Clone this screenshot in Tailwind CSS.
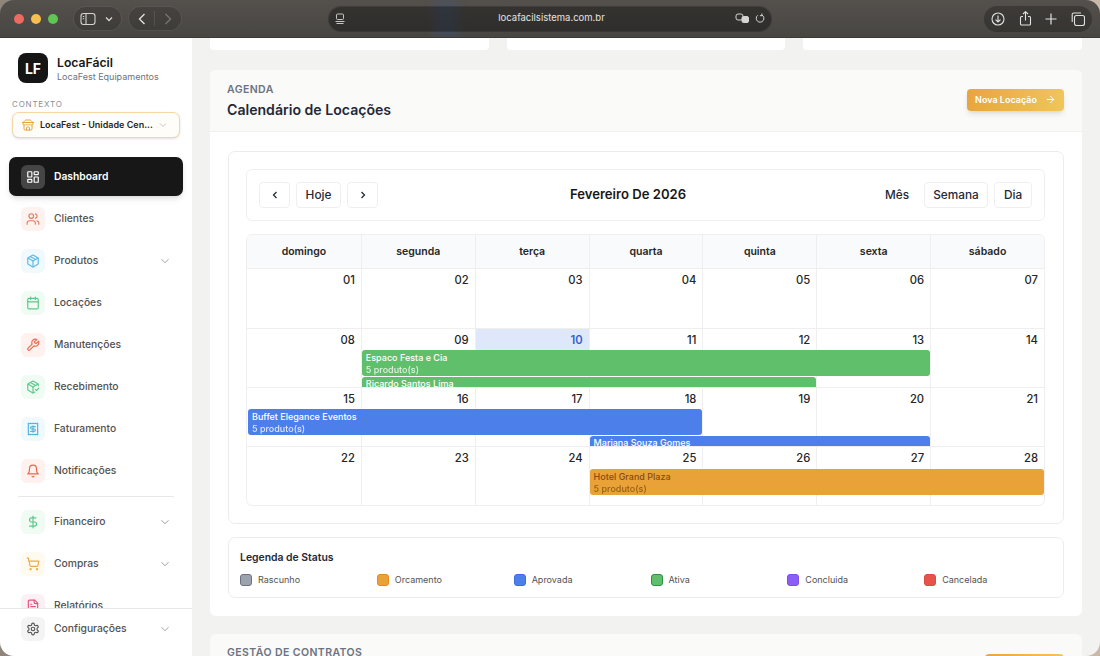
<!DOCTYPE html>
<html lang="pt-BR">

<head>
    <meta charset="UTF-8">
    <meta name="viewport" content="width=device-width, initial-scale=1.0">
    <title>LocaFácil</title>
    <script src="https://cdn.jsdelivr.net/npm/@tailwindcss/browser@4"></script>
</head>

<body class="bg-gradient-to-r from-[#8f857b] to-[#c9b9a9]">

    <div class="w-[1100px] h-[656px] overflow-hidden rounded-[14px] flex flex-col font-['Inter',sans-serif] text-[#1f2937]">

        <!-- barra do navegador -->
        <header class="relative overflow-hidden h-[38px] shrink-0 flex items-center bg-gradient-to-b from-[#54504c] to-[#484643] border-b border-[#3a3936]">
            <div class="absolute left-[434px] top-0 w-[24px] h-[38px] bg-[#3a5a8c]/30 blur-[4px]"></div>
            <div class="relative flex gap-[7px] ml-[14px]">
                <span class="w-[10px] h-[10px] rounded-full bg-[#ec6a5e]"></span>
                <span class="w-[10px] h-[10px] rounded-full bg-[#f4bf4f]"></span>
                <span class="w-[10px] h-[10px] rounded-full bg-[#61c554]"></span>
            </div>
            <div class="relative ml-[15px] w-[49px] h-[25px] rounded-full bg-black/15 border border-white/10 flex items-center pl-[6px] gap-[9px] text-[#d4d4d2]">
                <svg class="w-[16px] h-[14px]" viewBox="0 0 16 14" fill="none" stroke="currentColor" stroke-width="1.1"><rect x="1" y="1.5" width="14" height="11" rx="2.5"/><path d="M6 1.5v11M2.8 4.5h1.4M2.8 6.8h1.4"/></svg>
                <svg class="w-[8px] h-[6px]" viewBox="0 0 8 6" fill="none" stroke="currentColor" stroke-width="1.3"><path d="M1 1.5l3 3 3-3"/></svg>
            </div>
            <div class="relative ml-[6px] w-[54px] h-[25px] rounded-full bg-black/15 border border-white/10 flex items-center">
                <div class="w-[26px] h-[15px] border-r border-white/10 flex items-center justify-center text-[#e0e0de]">
                    <svg class="w-[8px] h-[12px]" viewBox="0 0 8 12" fill="none" stroke="currentColor" stroke-width="1.4"><path d="M6.5 1L1.5 6l5 5"/></svg>
                </div>
                <div class="w-[26px] flex items-center justify-center text-[#77756f]">
                    <svg class="w-[8px] h-[12px]" viewBox="0 0 8 12" fill="none" stroke="currentColor" stroke-width="1.4"><path d="M1.5 1l5 5-5 5"/></svg>
                </div>
            </div>
            <div class="relative ml-[146px] w-[444px] h-[26px] rounded-full bg-black/35 border border-white/5 flex items-center pl-[6px] pr-[5px] text-[#e4e4e2]">
                <svg class="w-[10px] h-[12px] text-[#c4c4c2]" viewBox="0 0 10 12" fill="none" stroke="currentColor" stroke-width="1"><rect x="1.5" y="1" width="7" height="5.5" rx="1"/><path d="M.5 8.5h9M1.5 10.5h7"/></svg>
                <span class="flex-1 text-center text-[9.5px] pl-[23px]">locafacilsistema.com.br</span>
                <svg class="w-[15px] h-[11px] text-[#d4d4d2]" viewBox="0 0 15 11" fill="none" stroke="currentColor" stroke-width="1"><rect x="1" y="1" width="7" height="6" rx="2"/><rect x="7" y="3.5" width="6.5" height="6" rx="1.5" fill="currentColor"/></svg>
                <svg class="ml-[5px] mr-[1px] w-[10px] h-[11px]" viewBox="0 0 11 11" fill="none" stroke="currentColor" stroke-width="1"><path d="M7.5 1.6A4.2 4.2 0 1 1 3 2M7.6 0v2.4H5.4"/></svg>
            </div>
            <div class="relative ml-[212px] w-[108px] h-[26px] rounded-full bg-black/25 flex items-center justify-between px-[7px] text-[#e2e2e0]">
                <svg class="w-[14px] h-[14px]" viewBox="0 0 14 14" fill="none" stroke="currentColor" stroke-width="1.1"><circle cx="7" cy="7" r="6"/><path d="M7 3.5v6.5M4.5 7.6L7 10l2.5-2.4"/></svg>
                <svg class="w-[13px] h-[15px]" viewBox="0 0 13 15" fill="none" stroke="currentColor" stroke-width="1.1"><path d="M4 5.5H2.5a1 1 0 0 0-1 1v6.5a1 1 0 0 0 1 1h8a1 1 0 0 0 1-1V6.5a1 1 0 0 0-1-1H9M6.5 9.5V.8M4 3l2.5-2.3L9 3"/></svg>
                <svg class="w-[12px] h-[12px]" viewBox="0 0 12 12" fill="none" stroke="currentColor" stroke-width="1.2"><path d="M6 .5v11M.5 6h11"/></svg>
                <svg class="w-[14px] h-[14px]" viewBox="0 0 14 14" fill="none" stroke="currentColor" stroke-width="1.1"><rect x="3.5" y="3.5" width="10" height="10" rx="2"/><path d="M1.2 10V2.5a1.5 1.5 0 0 1 1.5-1.5H10"/></svg>
            </div>
        </header>

        <div class="flex flex-1 min-h-0">

            <!-- menu lateral -->
            <aside class="w-[192px] shrink-0 bg-white flex flex-col">
                <div class="flex items-center gap-[9px] pl-[18px] pt-[15px]">
                    <div class="w-[30px] h-[30px] rounded-[8px] bg-[#151515] text-white text-[14px] font-bold flex items-center justify-center">LF</div>
                    <div class="pt-[2px]">
                        <div class="text-[12.2px] leading-[16px] font-semibold text-[#171717]">LocaFácil</div>
                        <div class="text-[9px] leading-[12px] text-[#6b7280]">LocaFest Equipamentos</div>
                    </div>
                </div>
                <div class="mt-[16px] ml-[12px] text-[8px] leading-[10px] tracking-[0.1em] text-[#8b8f96]">CONTEXTO</div>
                <div class="mt-[3px] mx-[12px] h-[26px] rounded-[7px] border border-[#f4d7a3] bg-[#fffdf9] flex items-center pl-[9px] pr-[10px] shadow-sm">
                    <svg class="w-[12px] h-[12px] text-[#e8a33d]" viewBox="0 0 24 24" fill="none" stroke="currentColor" stroke-width="2" stroke-linecap="round" stroke-linejoin="round"><path d="m2 7 4.41-4.41A2 2 0 0 1 7.83 2h8.34a2 2 0 0 1 1.42.59L22 7"/><path d="M4 12v8a2 2 0 0 0 2 2h12a2 2 0 0 0 2-2v-8"/><path d="M15 22v-4a2 2 0 0 0-2-2h-2a2 2 0 0 0-2 2v4"/><path d="M2 7h20"/><path d="M22 7v3a2 2 0 0 1-2 2a2.7 2.7 0 0 1-1.59-.63.7.7 0 0 0-.82 0A2.7 2.7 0 0 1 16 12a2.7 2.7 0 0 1-1.59-.63.7.7 0 0 0-.82 0A2.7 2.7 0 0 1 12 12a2.7 2.7 0 0 1-1.59-.63.7.7 0 0 0-.82 0A2.7 2.7 0 0 1 8 12a2.7 2.7 0 0 1-1.59-.63.7.7 0 0 0-.82 0A2.7 2.7 0 0 1 4 12a2 2 0 0 1-2-2V7"/></svg>
                    <span class="ml-[6px] flex-1 text-[9px] font-semibold text-[#262626] whitespace-nowrap">LocaFest - Unidade Cen...</span>
                    <svg class="w-[12px] h-[12px] text-[#b0b0b0]" viewBox="0 0 24 24" fill="none" stroke="currentColor" stroke-width="1.5"><path d="m6 9 6 6 6-6"/></svg>
                </div>

                <nav class="mt-[19px] flex-1 min-h-0 overflow-hidden relative text-[10.3px] font-medium text-[#525252]">
                    <a class="mx-[9px] h-[39px] rounded-[7px] bg-[#171717] text-white font-semibold flex items-center pl-[12px] gap-[9px] shadow-md">
                        <span class="w-[24px] h-[24px] rounded-[6px] bg-[#454545] flex items-center justify-center">
                            <svg class="w-[14px] h-[14px]" viewBox="0 0 24 24" fill="none" stroke="currentColor" stroke-width="2"><rect x="3" y="3" width="7" height="9" rx="1"/><rect x="14" y="3" width="7" height="5" rx="1"/><rect x="14" y="12" width="7" height="9" rx="1"/><rect x="3" y="16" width="7" height="5" rx="1"/></svg>
                        </span>
                        Dashboard
                    </a>
                    <a class="mt-[7px] h-[32px] flex items-center pl-[21px] gap-[9px]">
                        <span class="w-[24px] h-[24px] rounded-[6px] bg-[#fef2ef] flex items-center justify-center text-[#ea7a63]">
                            <svg class="w-[14px] h-[14px]" viewBox="0 0 24 24" fill="none" stroke="currentColor" stroke-width="2" stroke-linecap="round" stroke-linejoin="round"><path d="M16 21v-2a4 4 0 0 0-4-4H6a4 4 0 0 0-4 4v2"/><circle cx="9" cy="7" r="4"/><path d="M22 21v-2a4 4 0 0 0-3-3.87"/><path d="M16 3.13a4 4 0 0 1 0 7.75"/></svg>
                        </span>
                        Clientes
                    </a>
                    <a class="mt-[10px] h-[32px] flex items-center pl-[21px] gap-[9px]">
                        <span class="w-[24px] h-[24px] rounded-[6px] bg-[#f0f9fe] flex items-center justify-center text-[#5db8e8]">
                            <svg class="w-[14px] h-[14px]" viewBox="0 0 24 24" fill="none" stroke="currentColor" stroke-width="2" stroke-linecap="round" stroke-linejoin="round"><path d="m7.5 4.27 9 5.15"/><path d="M21 8a2 2 0 0 0-1-1.73l-7-4a2 2 0 0 0-2 0l-7 4A2 2 0 0 0 3 8v8a2 2 0 0 0 1 1.73l7 4a2 2 0 0 0 2 0l7-4A2 2 0 0 0 21 16Z"/><path d="m3.3 7 8.7 5 8.7-5"/><path d="M12 22V12"/></svg>
                        </span>
                        Produtos
                        <svg class="ml-auto mr-[20px] w-[14px] h-[14px] text-[#8f8f8f]" viewBox="0 0 24 24" fill="none" stroke="currentColor" stroke-width="1.5"><path d="m6 9 6 6 6-6"/></svg>
                    </a>
                    <a class="mt-[10px] h-[32px] flex items-center pl-[21px] gap-[9px]">
                        <span class="w-[24px] h-[24px] rounded-[6px] bg-[#f0fbf4] flex items-center justify-center text-[#5cc98a]">
                            <svg class="w-[14px] h-[14px]" viewBox="0 0 24 24" fill="none" stroke="currentColor" stroke-width="2" stroke-linecap="round" stroke-linejoin="round"><rect x="3" y="4" width="18" height="18" rx="2"/><path d="M16 2v4"/><path d="M8 2v4"/><path d="M3 10h18"/></svg>
                        </span>
                        Locações
                    </a>
                    <a class="mt-[10px] h-[32px] flex items-center pl-[21px] gap-[9px]">
                        <span class="w-[24px] h-[24px] rounded-[6px] bg-[#fef1ee] flex items-center justify-center text-[#e9694e]">
                            <svg class="w-[14px] h-[14px]" viewBox="0 0 24 24" fill="none" stroke="currentColor" stroke-width="2" stroke-linecap="round" stroke-linejoin="round"><path d="M14.7 6.3a1 1 0 0 0 0 1.4l1.6 1.6a1 1 0 0 0 1.4 0l3.77-3.77a6 6 0 0 1-7.94 7.94l-6.91 6.91a2.12 2.12 0 0 1-3-3l6.91-6.91a6 6 0 0 1 7.94-7.94l-3.76 3.76z"/></svg>
                        </span>
                        Manutenções
                    </a>
                    <a class="mt-[10px] h-[32px] flex items-center pl-[21px] gap-[9px]">
                        <span class="w-[24px] h-[24px] rounded-[6px] bg-[#f0fbf4] flex items-center justify-center text-[#5cc98a]">
                            <svg class="w-[14px] h-[14px]" viewBox="0 0 24 24" fill="none" stroke="currentColor" stroke-width="2" stroke-linecap="round" stroke-linejoin="round"><path d="m16 16 2 2 4-4"/><path d="M21 10V8a2 2 0 0 0-1-1.73l-7-4a2 2 0 0 0-2 0l-7 4A2 2 0 0 0 3 8v8a2 2 0 0 0 1 1.73l7 4a2 2 0 0 0 2 0l2-1.14"/><path d="m7.5 4.27 9 5.15"/><path d="M3.29 7 12 12l8.71-5"/><path d="M12 22V12"/></svg>
                        </span>
                        Recebimento
                    </a>
                    <a class="mt-[10px] h-[32px] flex items-center pl-[21px] gap-[9px]">
                        <span class="w-[24px] h-[24px] rounded-[6px] bg-[#f0f9fe] flex items-center justify-center text-[#4fb6e0]">
                            <svg class="w-[14px] h-[14px]" viewBox="0 0 24 24" fill="none" stroke="currentColor" stroke-width="2" stroke-linecap="round" stroke-linejoin="round"><path d="M4 2v20l2-1 2 1 2-1 2 1 2-1 2 1 2-1 2 1V2l-2 1-2-1-2 1-2-1-2 1-2-1-2 1Z"/><path d="M16 8h-6a2 2 0 1 0 0 4h4a2 2 0 1 1 0 4H8"/><path d="M12 17.5v-11"/></svg>
                        </span>
                        Faturamento
                    </a>
                    <a class="mt-[10px] h-[32px] flex items-center pl-[21px] gap-[9px]">
                        <span class="w-[24px] h-[24px] rounded-[6px] bg-[#fef1ee] flex items-center justify-center text-[#e9694e]">
                            <svg class="w-[14px] h-[14px]" viewBox="0 0 24 24" fill="none" stroke="currentColor" stroke-width="2" stroke-linecap="round" stroke-linejoin="round"><path d="M6 8a6 6 0 0 1 12 0c0 7 3 9 3 9H3s3-2 3-9"/><path d="M10.3 21a1.94 1.94 0 0 0 3.4 0"/></svg>
                        </span>
                        Notificações
                    </a>
                    <div class="mt-[9px] mx-[18px] border-t border-[#e8e8e8]"></div>
                    <a class="mt-[9px] h-[32px] flex items-center pl-[21px] gap-[9px]">
                        <span class="w-[24px] h-[24px] rounded-[6px] bg-[#f0fbf4] flex items-center justify-center text-[#5cc98a]">
                            <svg class="w-[14px] h-[14px]" viewBox="0 0 24 24" fill="none" stroke="currentColor" stroke-width="2" stroke-linecap="round" stroke-linejoin="round"><path d="M12 2v20"/><path d="M17 5H9.5a3.5 3.5 0 0 0 0 7h5a3.5 3.5 0 0 1 0 7H6"/></svg>
                        </span>
                        Financeiro
                        <svg class="ml-auto mr-[20px] w-[14px] h-[14px] text-[#8f8f8f]" viewBox="0 0 24 24" fill="none" stroke="currentColor" stroke-width="1.5"><path d="m6 9 6 6 6-6"/></svg>
                    </a>
                    <a class="mt-[10px] h-[32px] flex items-center pl-[21px] gap-[9px]">
                        <span class="w-[24px] h-[24px] rounded-[6px] bg-[#fffaf0] flex items-center justify-center text-[#eeaa45]">
                            <svg class="w-[14px] h-[14px]" viewBox="0 0 24 24" fill="none" stroke="currentColor" stroke-width="2" stroke-linecap="round" stroke-linejoin="round"><circle cx="8" cy="21" r="1"/><circle cx="19" cy="21" r="1"/><path d="M2.05 2.05h2l2.66 12.42a2 2 0 0 0 2 1.58h9.78a2 2 0 0 0 1.95-1.57l1.65-7.43H5.12"/></svg>
                        </span>
                        Compras
                        <svg class="ml-auto mr-[20px] w-[14px] h-[14px] text-[#8f8f8f]" viewBox="0 0 24 24" fill="none" stroke="currentColor" stroke-width="1.5"><path d="m6 9 6 6 6-6"/></svg>
                    </a>
                    <a class="mt-[10px] h-[32px] flex items-center pl-[21px] gap-[9px]">
                        <span class="w-[24px] h-[24px] rounded-[6px] bg-[#fdf0f4] flex items-center justify-center text-[#e5547c]">
                            <svg class="w-[14px] h-[14px]" viewBox="0 0 24 24" fill="none" stroke="currentColor" stroke-width="2" stroke-linecap="round" stroke-linejoin="round"><path d="M15 2H6a2 2 0 0 0-2 2v16a2 2 0 0 0 2 2h12a2 2 0 0 0 2-2V7Z"/><path d="M14 2v4a2 2 0 0 0 2 2h4"/><path d="M10 9H8"/><path d="M16 13H8"/><path d="M16 17H8"/></svg>
                        </span>
                        Relatórios
                    </a>
                </nav>

                <div class="h-[48px] shrink-0 border-t border-[#e8e8e8] pb-[8px] flex items-center pl-[21px] gap-[9px] text-[10.3px] font-medium text-[#525252]">
                    <span class="w-[24px] h-[24px] rounded-[6px] bg-[#f4f4f5] flex items-center justify-center text-[#555]">
                        <svg class="w-[14px] h-[14px]" viewBox="0 0 24 24" fill="none" stroke="currentColor" stroke-width="2" stroke-linecap="round" stroke-linejoin="round"><path d="M12.22 2h-.44a2 2 0 0 0-2 2v.18a2 2 0 0 1-1 1.73l-.43.25a2 2 0 0 1-2 0l-.15-.08a2 2 0 0 0-2.73.73l-.22.38a2 2 0 0 0 .73 2.73l.15.1a2 2 0 0 1 1 1.72v.51a2 2 0 0 1-1 1.74l-.15.09a2 2 0 0 0-.73 2.73l.22.38a2 2 0 0 0 2.73.73l.15-.08a2 2 0 0 1 2 0l.43.25a2 2 0 0 1 1 1.73V20a2 2 0 0 0 2 2h.44a2 2 0 0 0 2-2v-.18a2 2 0 0 1 1-1.73l.43-.25a2 2 0 0 1 2 0l.15.08a2 2 0 0 0 2.73-.73l.22-.39a2 2 0 0 0-.73-2.73l-.15-.08a2 2 0 0 1-1-1.74v-.5a2 2 0 0 1 1-1.74l.15-.09a2 2 0 0 0 .73-2.73l-.22-.38a2 2 0 0 0-2.73-.73l-.15.08a2 2 0 0 1-2 0l-.43-.25a2 2 0 0 1-1-1.73V4a2 2 0 0 0-2-2z"/><circle cx="12" cy="12" r="3"/></svg>
                    </span>
                    Configurações
                    <svg class="ml-auto mr-[20px] w-[14px] h-[14px] text-[#8f8f8f]" viewBox="0 0 24 24" fill="none" stroke="currentColor" stroke-width="1.5"><path d="m6 9 6 6 6-6"/></svg>
                </div>
            </aside>

            <!-- conteúdo -->
            <main class="flex-1 min-w-0 overflow-hidden bg-[#f2f2f1] px-[18px]">
                <div class="h-[12px] grid grid-cols-3 gap-[18px]">
                    <div class="bg-white rounded-b-[4px]"></div>
                    <div class="bg-white rounded-b-[4px]"></div>
                    <div class="bg-white rounded-b-[4px]"></div>
                </div>

                <section class="mt-[20px] bg-white rounded-[6px]">
                    <div class="h-[62px] bg-[#fafaf8] border-b border-[#f0f0ee] rounded-t-[6px] flex items-center justify-between pl-[17px] pr-[18px]">
                        <div>
                            <div class="pt-[1px] text-[10.5px] leading-[14px] font-semibold tracking-[0.04em] text-[#6b7280]">AGENDA</div>
                            <h2 class="mt-[3px] text-[14.1px] leading-[20px] font-semibold text-[#1f2937]">Calendário de Locações</h2>
                        </div>
                        <button class="mb-[2px] w-[97px] h-[22px] rounded-[4px] bg-gradient-to-r from-[#e8a53f] to-[#f0c55c] text-white text-[9px] font-semibold flex items-center justify-center gap-[8px] shadow-md">
                            Nova Locação
                            <svg class="w-[11px] h-[11px]" viewBox="0 0 24 24" fill="none" stroke="currentColor" stroke-width="2" stroke-linecap="round" stroke-linejoin="round"><path d="M5 12h14"/><path d="m12 5 7 7-7 7"/></svg>
                        </button>
                    </div>

                    <div class="p-[18px] pt-[19px]">
                        <div class="border border-[#ececec] rounded-[7px] p-[17px]">
                            <!-- barra do calendário -->
                            <div class="h-[52px] mr-[1px] border border-[#efefef] rounded-[6px] flex items-center px-[12px]">
                                <div class="w-[119px] flex gap-[6px]">
                                    <button class="w-[31px] h-[26px] border border-[#efefef] rounded-[4px] flex items-center justify-center">
                                        <svg class="w-[12px] h-[12px]" viewBox="0 0 24 24" fill="none" stroke="currentColor" stroke-width="2.5"><path d="m15 18-6-6 6-6"/></svg>
                                    </button>
                                    <button class="w-[45px] h-[26px] pt-[1px] border border-[#efefef] rounded-[4px] text-[11.8px] font-medium">Hoje</button>
                                    <button class="w-[31px] h-[26px] border border-[#efefef] rounded-[4px] flex items-center justify-center">
                                        <svg class="w-[12px] h-[12px]" viewBox="0 0 24 24" fill="none" stroke="currentColor" stroke-width="2.5"><path d="m9 18 6-6-6-6"/></svg>
                                    </button>
                                </div>
                                <h3 class="ml-[192px] text-[13.1px] font-semibold text-[#171717]">Fevereiro De 2026</h3>
                                <div class="ml-auto flex items-center gap-[6px] text-[11.8px] font-medium">
                                    <span class="mr-[9px] pt-[1px]">Mês</span>
                                    <button class="w-[64px] h-[26px] pt-[1px] border border-[#efefef] rounded-[4px]">Semana</button>
                                    <button class="w-[38px] h-[26px] pt-[1px] border border-[#efefef] rounded-[4px]">Dia</button>
                                </div>
                            </div>

                            <!-- grade do calendário -->
                            <div class="mt-[13px] mr-[1px] border border-[#efefef] rounded-[6px] overflow-hidden">
                                <div class="h-[33px] grid grid-cols-7 bg-[#f9fafb] text-[10.5px] font-semibold text-[#262626]">
                                    <div class="flex items-center justify-center">domingo</div>
                                    <div class="flex items-center justify-center border-l border-[#efefef]">segunda</div>
                                    <div class="flex items-center justify-center border-l border-[#efefef]">terça</div>
                                    <div class="flex items-center justify-center border-l border-[#efefef]">quarta</div>
                                    <div class="flex items-center justify-center border-l border-[#efefef]">quinta</div>
                                    <div class="flex items-center justify-center border-l border-[#efefef]">sexta</div>
                                    <div class="flex items-center justify-center border-l border-[#efefef]">sábado</div>
                                </div>

                                <div class="h-[60px] grid grid-cols-7 border-t border-[#efefef] text-[11.25px] font-medium leading-[22px] text-right text-[#262626]">
                                    <div class="pr-[6px]">01</div>
                                    <div class="pr-[6px] border-l border-[#efefef]">02</div>
                                    <div class="pr-[6px] border-l border-[#efefef]">03</div>
                                    <div class="pr-[6px] border-l border-[#efefef]">04</div>
                                    <div class="pr-[6px] border-l border-[#efefef]">05</div>
                                    <div class="pr-[6px] border-l border-[#efefef]">06</div>
                                    <div class="pr-[6px] border-l border-[#efefef]">07</div>
                                </div>

                                <div class="relative h-[59px] overflow-hidden grid grid-cols-7 border-t border-[#efefef] text-[11.25px] font-medium leading-[22px] text-right text-[#262626]">
                                    <div class="pr-[6px]">08</div>
                                    <div class="pr-[6px] border-l border-[#efefef]">09</div>
                                    <div class="border-l border-[#efefef]"><div class="pr-[6px] bg-[#dfe8fa] font-semibold text-[#2f5fd0]">10</div></div>
                                    <div class="pr-[6px] border-l border-[#efefef]">11</div>
                                    <div class="pr-[6px] border-l border-[#efefef]">12</div>
                                    <div class="pr-[6px] border-l border-[#efefef]">13</div>
                                    <div class="pr-[6px] border-l border-[#efefef]">14</div>
                                    <div class="absolute inset-0 pt-[21px] grid grid-cols-7 auto-rows-min gap-y-[1px] text-left text-[9px] leading-[11.5px] text-white">
                                        <div class="col-start-2 col-span-5 ml-[1px] h-[26px] rounded-[3px] bg-[#5fbf6a] px-[4px] pt-[2px]">Espaco Festa e Cia<div class="opacity-80">5 produto(s)</div></div>
                                        <div class="col-start-2 col-span-4 ml-[1px] h-[26px] rounded-[3px] bg-[#5fbf6a] px-[4px] pt-[1px]">Ricardo Santos Lima</div>
                                    </div>
                                </div>

                                <div class="relative h-[59px] overflow-hidden grid grid-cols-7 border-t border-[#efefef] text-[11.25px] font-medium leading-[22px] text-right text-[#262626]">
                                    <div class="pr-[6px]">15</div>
                                    <div class="pr-[6px] border-l border-[#efefef]">16</div>
                                    <div class="pr-[6px] border-l border-[#efefef]">17</div>
                                    <div class="pr-[6px] border-l border-[#efefef]">18</div>
                                    <div class="pr-[6px] border-l border-[#efefef]">19</div>
                                    <div class="pr-[6px] border-l border-[#efefef]">20</div>
                                    <div class="pr-[6px] border-l border-[#efefef]">21</div>
                                    <div class="absolute inset-0 pt-[21px] grid grid-cols-7 auto-rows-min gap-y-[1px] text-left text-[9px] leading-[11.5px] text-white">
                                        <div class="col-start-1 col-span-4 ml-[1px] h-[26px] rounded-[3px] bg-[#4d7fea] px-[4px] pt-[2px]">Buffet Elegance Eventos<div class="opacity-80">5 produto(s)</div></div>
                                        <div class="col-start-4 col-span-3 ml-[1px] h-[26px] rounded-[3px] bg-[#4d7fea] px-[4px] pt-[1px]">Mariana Souza Gomes</div>
                                    </div>
                                </div>

                                <div class="relative h-[59px] overflow-hidden grid grid-cols-7 border-t border-[#efefef] text-[11.25px] font-medium leading-[22px] text-right text-[#262626]">
                                    <div class="pr-[6px]">22</div>
                                    <div class="pr-[6px] border-l border-[#efefef]">23</div>
                                    <div class="pr-[6px] border-l border-[#efefef]">24</div>
                                    <div class="pr-[6px] border-l border-[#efefef]">25</div>
                                    <div class="pr-[6px] border-l border-[#efefef]">26</div>
                                    <div class="pr-[6px] border-l border-[#efefef]">27</div>
                                    <div class="pr-[6px] border-l border-[#efefef]">28</div>
                                    <div class="absolute inset-0 pt-[22px] grid grid-cols-7 auto-rows-min text-left text-[9px] leading-[11.5px] text-[#8a4b0f]">
                                        <div class="col-start-4 col-span-4 ml-[1px] h-[26px] rounded-[3px] bg-[#e8a238] px-[4px] pt-[2px]">Hotel Grand Plaza<div class="opacity-80">5 produto(s)</div></div>
                                    </div>
                                </div>
                            </div>
                        </div>

                        <!-- legenda -->
                        <div class="mt-[13px] h-[61px] border border-[#ececec] rounded-[7px] px-[11px] pt-[13px]">
                            <h4 class="text-[10.4px] leading-[14px] font-semibold text-[#1f2937]">Legenda de Status</h4>
                            <div class="mt-[8px] grid grid-cols-6 gap-x-[9px] text-[9px] text-[#525252]">
                                <div class="flex items-center gap-[6px]"><span class="w-[12px] h-[12px] rounded-[3px] bg-[#9ca3af] border border-[#6b7280]"></span>Rascunho</div>
                                <div class="flex items-center gap-[6px]"><span class="w-[12px] h-[12px] rounded-[3px] bg-[#e8a238] border border-[#e8891c]"></span>Orcamento</div>
                                <div class="flex items-center gap-[6px]"><span class="w-[12px] h-[12px] rounded-[3px] bg-[#4d7fea] border border-[#3b6fe0]"></span>Aprovada</div>
                                <div class="flex items-center gap-[6px]"><span class="w-[12px] h-[12px] rounded-[3px] bg-[#5fbf6a] border border-[#2f8f49]"></span>Ativa</div>
                                <div class="flex items-center gap-[6px]"><span class="w-[12px] h-[12px] rounded-[3px] bg-[#8b5cf6] border border-[#7c4fe8]"></span>Concluida</div>
                                <div class="flex items-center gap-[6px]"><span class="w-[12px] h-[12px] rounded-[3px] bg-[#e5534b] border border-[#dc4b44]"></span>Cancelada</div>
                            </div>
                        </div>
                    </div>
                </section>

                <section class="mt-[18px] h-[60px] bg-[#fafaf8] rounded-t-[6px] flex justify-between pl-[17px] pr-[18px] pt-[12px]">
                    <div class="text-[10.5px] leading-[14px] font-semibold tracking-[0.04em] text-[#6b7280]">GESTÃO DE CONTRATOS</div>
                    <div class="mt-[8px] w-[79px] h-[22px] rounded-[4px] bg-gradient-to-r from-[#e8a53f] to-[#f0c55c]"></div>
                </section>
            </main>
        </div>
    </div>

</body>

</html>
